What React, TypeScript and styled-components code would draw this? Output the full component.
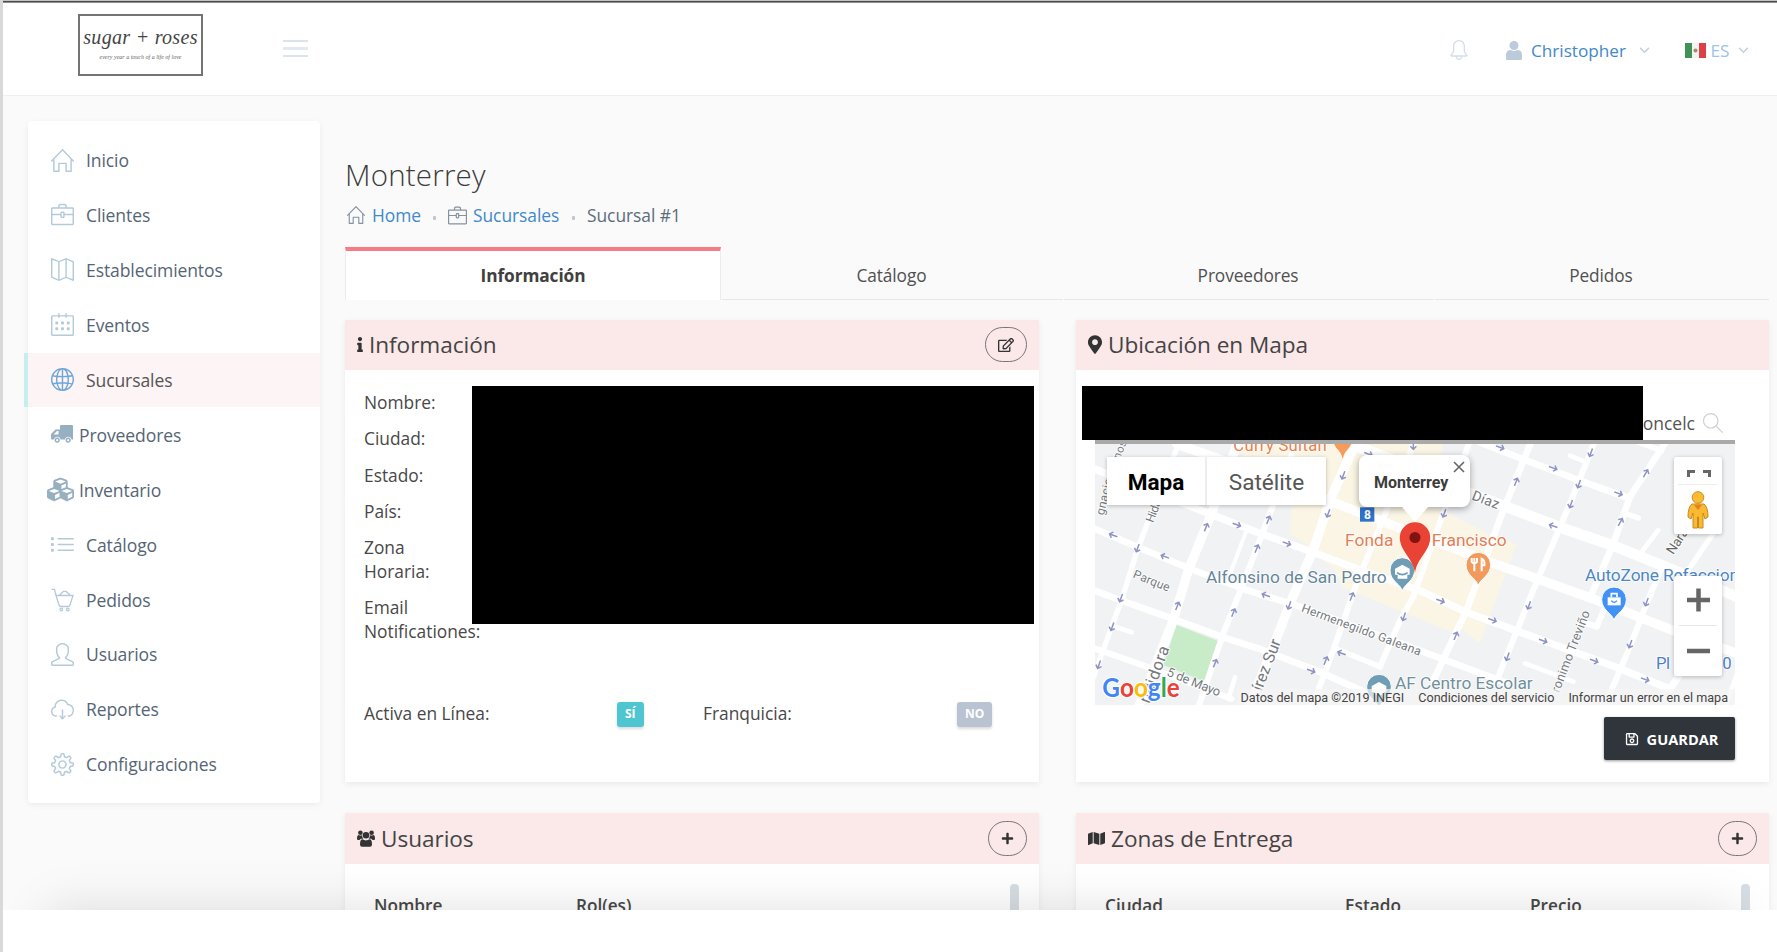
import React from 'react';
import styled, { createGlobalStyle, css } from 'styled-components';
import {
  SlHome, SlBriefcase, SlMap, SlCalender, SlGlobe, SlList, SlUser,
  SlCloudDownload, SlSettings, SlBell, SlMagnifier,
} from 'react-icons/sl';
import { FaCubes, FaMap, FaPlus, FaRegEdit, FaRegSave, FaMapMarkerAlt, FaInfo } from 'react-icons/fa';

const Global = createGlobalStyle`
  *, *::before, *::after { box-sizing: border-box; }
  body { margin: 0; background: #fff; font-family: 'Open Sans', 'Liberation Sans', sans-serif; color: #4a4a4a; }
  svg { display: block; }
`;

const Frame = styled.div`
  position: relative;
  width: 1777px;
  height: 952px;
  overflow: hidden;
  border-left: 3px solid #d9d9d9;
  background: #fff;
`;
const TopEdge = styled.div`
  height: 3px;
  margin-left: -3px;
  background: linear-gradient(#c4c4c4 0 1px, #4d4d4d 1px 2px, #8c8f8c 2px 3px);
`;
const Page = styled.div`
  height: 910px;
  overflow: hidden;
  background: #fafafa;
`;
const Header = styled.header`
  display: flex;
  align-items: center;
  height: 93px;
  padding: 0 27px 0 75px;
  background: #fff;
  border-bottom: 1px solid #edeff5;
`;
const Logo = styled.div`
  width: 125px;
  height: 62px;
  margin-top: -8px;
  padding-top: 9px;
  border: 2px solid #747474;
  text-align: center;
  font-family: 'Liberation Serif', serif;
  font-style: italic;
  color: #444;
`;
const LogoName = styled.div`
  font-size: 20px;
  line-height: 25px;
  letter-spacing: 0.3px;
  white-space: nowrap;
`;
const LogoTag = styled.div`
  font-size: 6px;
  line-height: 14px;
  color: #666;
  white-space: nowrap;
`;
const Burger = styled.div`
  display: flex;
  flex-direction: column;
  justify-content: space-between;
  width: 25px;
  height: 17px;
  margin: -1px auto 0 80px;
  span { height: 2px; background: #dbe3ee; }
  span:nth-child(2) { height: 3px; background: #e2e9f2; }
`;
const HeaderItem = styled.div<{ $w: number; $c?: string }>`
  display: flex;
  align-items: center;
  width: ${p => p.$w}px;
  height: 30px;
  margin-top: 2px;
  white-space: nowrap;
  font-size: 17.2px;
  color: ${p => p.$c || '#4189c9'};
  svg { flex: none; }
`;
const Body = styled.div`
  display: flex;
  align-items: flex-start;
  padding: 25px 5px 0 25px;
`;
const Sidebar = styled.nav`
  width: 292px;
  height: 682px;
  margin-right: 25px;
  padding-top: 12px;
  background: #fff;
  border-radius: 4px;
  box-shadow: 0 2px 6px rgba(0, 0, 0, 0.06);
`;
const NavItem = styled.a<{ $active?: boolean }>`
  display: flex;
  align-items: center;
  height: 54px;
  margin-bottom: 0.95px;
  padding-left: 22px;
  font-size: 17.55px;
  letter-spacing: -0.1px;
  color: #556575;
  ${p => p.$active && css`
    margin-left: -4px;
    border-left: 4px solid #c5efec;
    background: #fdf4f5;
    color: #555;
  `}
`;
const NavIcon = styled.span<{ $solid?: boolean; $active?: boolean; $wide?: boolean }>`
  display: flex;
  justify-content: center;
  flex: none;
  width: ${p => (p.$wide ? 28 : 24)}px;
  margin-left: ${p => (p.$wide ? -4 : 0)}px;
  margin-right: ${p => (p.$solid ? 5 : 12)}px;
  color: ${p => (p.$active ? '#6fa6d8' : p.$solid ? '#96afc1' : '#b3cadb')};
`;
const Main = styled.main`
  width: 1424px;
  padding-top: 34px;
`;
const Title = styled.h1`
  margin: 0;
  font-size: 29.5px;
  line-height: 40px;
  font-weight: 300;
  letter-spacing: 0.2px;
  color: #3c3c3c;
`;
const Crumbs = styled.div`
  display: flex;
  align-items: center;
  height: 24px;
  margin: 8px 0 20px;
  padding-left: 2px;
  font-size: 17.4px;
  letter-spacing: -0.05px;
  color: #5d6c7a;
  svg { flex: none; color: #8493a0; }
`;
const Crumb = styled.a<{ $w: number; $gap: number }>`
  width: ${p => p.$w}px;
  padding-left: ${p => p.$gap}px;
  color: #4189c9;
  white-space: nowrap;
`;
const Dot = styled.span`
  width: 3px;
  height: 4px;
  margin: 5px 12px 0 0;
  background: #c0c6d0;
  border-radius: 1px;
`;
const Tabs = styled.div`
  display: grid;
  grid-template-columns: 376px 341px 370px 334px;
  column-gap: 1px;
  height: 53px;
`;
const Tab = styled.div<{ $active?: boolean }>`
  display: flex;
  align-items: center;
  justify-content: center;
  padding: 4px 2px 0 0;
  font-size: 17.3px;
  letter-spacing: -0.1px;
  color: #505050;
  border-bottom: 1px solid #e6e8e8;
  ${p => p.$active && css`
    padding: 0;
    border: 1px solid #ececec;
    border-top: 4px solid #f47c82;
    border-bottom: 0;
    background: #fff;
    font-weight: 700;
    color: #404040;
  `}
`;
const Cards = styled.div`
  display: grid;
  grid-template-columns: 694px 693px;
  grid-template-rows: 462px 200px;
  column-gap: 37px;
  row-gap: 31px;
  margin-top: 20px;
`;
const Card = styled.section`
  background: #fff;
  box-shadow: 0 2px 6px rgba(0, 0, 0, 0.07);
`;
const CardHead = styled.div<{ $h: number }>`
  display: flex;
  align-items: center;
  height: ${p => p.$h}px;
  padding: 0 12px ${p => (p.$h === 50 ? 1 : 0)}px;
  background: #fbe8e9;
  font-size: 22.6px;
  color: #444;
`;
const HeadIcon = styled.span<{ $w: number; $h: number }>`
  flex: none;
  svg {
    width: ${p => p.$w}px;
    height: ${p => p.$h}px;
    color: #333;
  }
`;
const HeadText = styled.span`
  margin-left: 6px;
  flex: 1;
  letter-spacing: -0.05px;
`;
const RoundButton = styled.button<{ $w: number }>`
  display: flex;
  align-items: center;
  justify-content: center;
  width: ${p => p.$w}px;
  height: 35px;
  padding: 0;
  border: 1.5px solid #777;
  border-radius: 18px;
  background: transparent;
  color: #333;
`;
const InfoBody = styled.div`
  position: relative;
  padding: 20px 19px 0;
  font-size: 17.35px;
  line-height: 24px;
  color: #484848;
`;
const Field = styled.div`
  width: 90px;
  margin-bottom: 12.3px;
`;
const Redaction = styled.div<{ $x: number; $y: number; $w: number; $h: number }>`
  position: absolute;
  left: ${p => p.$x}px;
  top: ${p => p.$y}px;
  width: ${p => p.$w}px;
  height: ${p => p.$h}px;
  background: #000;
`;
const Flags = styled.div`
  display: grid;
  grid-template-columns: 253px 86px 254px 60px;
  align-items: center;
  margin-top: 56px;
`;
const Badge = styled.span<{ $c: string }>`
  justify-self: start;
  height: 25px;
  margin-top: 3px;
  padding: 0 8px;
  border-radius: 3px;
  background: ${p => p.$c};
  box-shadow: 0 2px 3px rgba(0, 0, 0, 0.15);
  color: #fff;
  font-size: 12px;
  line-height: 24px;
  font-weight: 700;
`;
const MapBody = styled.div`
  position: relative;
  padding: 0 34px 0 19px;
`;
const Search = styled.div`
  display: flex;
  justify-content: flex-end;
  align-items: center;
  height: 74px;
  padding: 35px 12px 0 0;
  border-bottom: 4px solid #a9a9a9;
  font-size: 17.5px;
  color: #555;
  svg { margin-left: 8px; color: #d0d0d0; }
`;
const MapBox = styled.div`
  position: relative;
  height: 261px;
  overflow: hidden;
  font-family: Roboto, sans-serif;
`;
const MapSwitch = styled.div`
  position: absolute;
  left: 12px;
  top: 13px;
  display: flex;
  height: 48px;
  box-shadow: 0 1px 4px rgba(0, 0, 0, 0.25);
`;
const SwitchItem = styled.div<{ $w: number; $on?: boolean }>`
  width: ${p => p.$w}px;
  background: #fff;
  border-right: ${p => (p.$on ? '2px solid #ededed' : '0')};
  text-align: center;
  line-height: 51px;
  font-size: ${p => (p.$on ? 22.6 : 22.6)}px;
  font-weight: ${p => (p.$on ? 700 : 400)};
  color: ${p => (p.$on ? '#000' : '#565656')};
`;
const MapControl = styled.div<{ $y: number; $h: number }>`
  position: absolute;
  left: 579px;
  top: ${p => p.$y}px;
  width: 48px;
  height: ${p => p.$h}px;
  background: #fff;
  border-radius: 2px;
  box-shadow: 0 1px 4px rgba(0, 0, 0, 0.25);
`;
const Popup = styled.div`
  position: absolute;
  left: 264px;
  top: 11px;
  width: 111px;
  height: 52px;
  padding-left: 15px;
  border-radius: 8px;
  background: #fff;
  box-shadow: 0 2px 7px rgba(0, 0, 0, 0.35);
  font-size: 16px;
  line-height: 56px;
  font-weight: 700;
  color: #3c3c3c;
  svg { position: absolute; right: 5px; top: 6px; }
  &::after {
    content: '';
    position: absolute;
    left: 43px;
    top: 52px;
    border: 13px solid transparent;
    border-top: 15px solid #fff;
    border-bottom: 0;
  }
`;
const Pin = styled.svg`
  position: absolute;
  left: 304px;
  top: 78px;
`;
const Legal = styled.div`
  position: absolute;
  right: 0;
  bottom: 0;
  display: flex;
  gap: 14px;
  height: 16px;
  padding: 0 7px 0 4px;
  background: rgba(245, 245, 245, 0.7);
  font-size: 12.6px;
  line-height: 17px;
  color: #444;
  white-space: nowrap;
`;
const Save = styled.button`
  display: flex;
  align-items: center;
  justify-content: center;
  gap: 8px;
  width: 131px;
  height: 43px;
  margin: 12px 0 0 auto;
  padding: 0 0 0 4px;
  border: 0;
  border-radius: 2px;
  background: #2f353b;
  box-shadow: 0 1px 3px rgba(0, 0, 0, 0.4);
  color: #fff;
  font: 700 14.6px 'Open Sans', sans-serif;
`;
const TableHead = styled.div<{ $cols: string }>`
  display: grid;
  grid-template-columns: ${p => p.$cols};
  padding: 20px 0 0 29px;
  font-size: 17.2px;
  line-height: 44px;
  font-weight: 600;
  color: #484848;
`;
const Thumb = styled.span`
  width: 9px;
  height: 60px;
  border-radius: 4px;
  background: #d6dee3;
`;
const Shade = styled.div`
  position: absolute;
  left: 45px;
  top: 910px;
  width: 1690px;
  height: 100px;
  box-shadow: 0 0 50px rgba(0, 0, 0, 0.13);
`;
const Footer = styled.div`
  position: relative;
  height: 42px;
  background: #fff;
`;

const Chevron = () => (
  <svg width="11" height="7" viewBox="0 0 12 8" fill="none" stroke="#c3d0df" strokeWidth="1.7"><path d="M1 1l5 5 5-5" /></svg>
);
const Truck = () => (
  <svg width="23" height="19" viewBox="0 0 23 19">
    <path fill="currentColor" fillRule="evenodd" d="M10 0H21Q22 0 22 1V14.500H20.500A3.300 3.300 0 0 0 14 14.500H9.500A3.300 3.300 0 0 0 3 14.500H1Q0 14.500 0 13.500V9L4.500 4.500H9V1Q9 0 10 0zM6 6L2.500 9.500H7.500V6z" />
    <path fill="currentColor" fillRule="evenodd" d="M6.200 12.500a2.600 2.600 0 1 0 .01 0zm0 1.500a1.100 1.100 0 1 1-.01 0zM17.200 12.500a2.600 2.600 0 1 0 .01 0zm0 1.500a1.100 1.100 0 1 1-.01 0z" />
  </svg>
);
const Cart = () => (
  <svg width="23" height="24" viewBox="0 0 23 24" fill="none" stroke="currentColor" strokeWidth="1.300">
    <path d="M.5 1.300H3.500L5 7.500L8 17Q8.500 18.500 10 18.500H17Q18.500 18.500 19 17L22 7.500H5M8 7.500L12.500 3.300H15L19.500 7.500" />
    <circle cx="10.300" cy="21.500" r="1.300" /><circle cx="16.800" cy="21.500" r="1.300" />
  </svg>
);
const Group = () => (
  <svg viewBox="0 0 18 17" fill="#333">
    <circle cx="3.400" cy="2.700" r="2.300" /><circle cx="14.600" cy="2.700" r="2.300" />
    <path d="M0 8.500Q0 5 1.800 5Q3.400 6 5 5.200Q5 7.500 6.300 8.700H3.800Q2.800 9.500 2.500 10H1Q0 10 0 8.500zM18 8.500Q18 5 16.200 5Q14.600 6 13 5.200Q13 7.500 11.700 8.700H14.200Q15.200 9.500 15.500 10H17Q18 10 18 8.500z" />
    <circle cx="9" cy="5.300" r="3.300" />
    <path d="M3 14.500Q3 9.300 5.500 9.300Q9 11.500 12.500 9.300Q15 9.300 15 14.500Q15 16.700 13 16.700H5Q3 16.700 3 14.500z" />
  </svg>
);

const nav: { label: string; icon: React.ReactNode; solid?: boolean; wide?: boolean; active?: boolean }[] = [
  { label: 'Inicio', icon: <SlHome size={23} /> },
  { label: 'Clientes', icon: <SlBriefcase size={23} /> },
  { label: 'Establecimientos', icon: <SlMap size={23} /> },
  { label: 'Eventos', icon: <SlCalender size={23} /> },
  { label: 'Sucursales', icon: <SlGlobe size={23} />, active: true },
  { label: 'Proveedores', icon: <Truck />, solid: true },
  { label: 'Inventario', icon: <FaCubes size={27} />, solid: true, wide: true },
  { label: 'Catálogo', icon: <SlList size={23} /> },
  { label: 'Pedidos', icon: <Cart /> },
  { label: 'Usuarios', icon: <SlUser size={23} /> },
  { label: 'Reportes', icon: <SlCloudDownload size={23} /> },
  { label: 'Configuraciones', icon: <SlSettings size={23} /> },
];

/* Road centre lines: [width, points] */
const roads: [number, string][] = [
  [16, '255,-10 130,308 80,468 50,548 -5,700'],
  [28, '430,-10 350,208 280,378 235,528 160,720 130,790'],
  [18, '605,-10 525,208 445,418 385,568 310,790'],
  [12, '455,258 405,390'],
  [28, '785,-10 705,168 655,318 585,478 535,608 462,790'],
  [18, '960,-10 855,248 785,418 715,618 650,790'],
  [18, '1125,-10 1045,208 1005,318 955,458 915,530 855,668'],
  [20, '1310,-10 1225,198 1115,498 1015,710'],
  [18, '1500,-10 1425,178 1315,438 1205,710'],
  [20, '1715,-10 1605,158 1555,298 1490,450'],
  [18, '1535,480 1505,548 1475,538'],
  [18, '1700,370 1655,478 1605,608 1540,760'],
  [16, '1860,260 1765,400'],
  [14, '1690,258 1635,330'],
  [20, '-10,250 130,310 295,378 445,435 615,488 975,620 1230,715'],
  [22, '-10,72 265,178 345,210 495,268 655,325 795,378 975,440 1115,505 1345,590 1565,670 1725,735 1755,690'],
  [28, '245,0 415,60 715,175 895,245 1095,320 1195,358 1315,400 1495,465 1735,560 1930,630'],
  [32, '780,5 900,50 1130,150 1225,185 1395,250 1555,305 1735,378 1930,460'],
  [20, '1155,-5 1295,50 1455,110 1600,162'],
  [14, '1425,35 1475,55'],
  [16, '1630,-5 1700,20'],
  [16, '1590,208 1630,222'],
  [20, '-10,437 95,475 235,525 385,580 495,615 665,680 800,740 900,790'],
  [18, '-10,610 155,668 410,765'],
  [16, '725,615 855,668'],
  [14, '60,548 110,565'],
  [14, '420,700 400,765'],
  [14, '1290,658 1435,713'],
  [14, '1930,680 1890,790'],
];
/* One-way markers: x, y, angle */
const arrows: [number, number, number][] = [
  [55, 274, 200], [128, 312, 110], [210, 338, 200], [333, 250, -68], [425, 242, 20], [520, 228, -68],
  [485, 314, -68], [575, 298, 20], [700, 208, 110], [745, 94, 110], [78, 462, 110], [247, 486, -68],
  [52, 548, 110], [12, 662, 110], [415, 506, -68], [513, 454, 200], [583, 484, 110], [770, 458, -68],
  [927, 518, 110], [740, 628, 200], [692, 650, -68], [648, 680, 20], [360, 658, -68], [1215, 10, 20],
  [1488, 26, 110], [1374, 72, 20], [1263, 114, -68], [1452, 120, 110], [1428, 180, 110], [1570, 148, 20],
  [1652, 88, -60], [1576, 234, -60], [1375, 246, 200], [1048, 208, 110], [1036, 470, 20], [1302, 484, 110],
  [1192, 528, 20], [1082, 576, -68], [1344, 590, 20], [1238, 638, 110], [1497, 650, 20], [1606, 600, 110],
  [1655, 474, 110], [1650, 706, 20], [820, 30, 20], [955, 4, 90],
];

type LabelProps = { x: number; y: number; w: number; s: number; c?: string; r?: number; children: string };
const Label = ({ x, y, w, s, c = '#757a7e', r = 0, children }: LabelProps) => (
  <text
    x={x} y={y} fontSize={s} fill={c} textLength={w} stroke="#fff" strokeWidth="5" paintOrder="stroke"
    strokeLinejoin="round" transform={`rotate(${r} ${x} ${y})`}
  >{children}</text>
);
const Poi = ({ x, y, c }: { x: number; y: number; c: string }) => (
  <path transform={`translate(${x} ${y})`} fill={c} stroke="#fff" strokeWidth="3" d="M0 56C-4 34-37 26-37-8a37 37 0 0 1 74 0C37 26 4 34 0 56z" />
);

const CityMap = () => (
  <svg width="640" height="261" viewBox="0 0 1920 783" fontFamily="Roboto, sans-serif">
    <rect width="1920" height="783" fill="#f0f2f4" />
    <path fill="#faf5e4" d="M415 0H1045L1010 180L1180 270L1265 300L1155 598L1105 560L1070 565L740 430L720 380L645 310L585 270L590 190z" />
    <path fill="#c8ebc8" d="M245 543L375 593L330 713L205 663z" />
    <g fill="none" stroke="#fff" strokeLinejoin="round" strokeLinecap="round">
      {roads.map(([w, pts], i) => <polyline key={i} points={pts} strokeWidth={w} />)}
    </g>
    <g fill="none" stroke="#8e93c4" strokeWidth="4.5">
      {arrows.map(([x, y, a], i) => (
        <path key={i} transform={`translate(${x} ${y}) rotate(${a})`} d="M-13 0H12M3-9L12 0L3 9" />
      ))}
    </g>
    <Label x={415} y={20} w={280} s={50} c="#e8804f">Curry Sultan</Label>
    <path fill="#f59c5b" d="M712-10H775L762 12Q748 24 743 44Q738 24 724 12z" />
    <Label x={74} y={48} w={58} s={34} r={-68}>nos</Label>
    <Label x={26} y={215} w={112} s={36} r={-76}>gnacio</Label>
    <Label x={175} y={238} w={70} s={36} r={-70}>Hida</Label>
    <Label x={112} y={400} w={115} s={36} r={22}>Parque</Label>
    <Label x={163} y={780} w={178} s={50} r={-70}>ndidora</Label>
    <Label x={213} y={694} w={170} s={38} r={22}>5 de Mayo</Label>
    <Label x={500} y={744} w={162} s={48} r={-69}>írez Sur</Label>
    <Label x={617} y={502} w={380} s={36} r={20.5}>Hermenegildo Galeana</Label>
    <Label x={1128} y={166} w={84} s={42} r={21}>Díaz</Label>
    <Label x={1392} y={748} w={260} s={38} r={-69}>ronimo Treviño</Label>
    <Label x={1735} y={334} w={84} s={40} r={-57} c="#666">Nara</Label>
    <rect x="795" y="190" width="43" height="43" fill="#2f73cc" />
    <text x="807" y="225" fontSize="36" fontWeight="700" fill="#fff">8</text>
    <Label x={750} y={307} w={145} s={52} c="#e37d55">Fonda</Label>
    <Label x={1010} y={307} w={225} s={52} c="#e37d55">Francisco</Label>
    <Label x={333} y={418} w={542} s={52} c="#65859a">Alfonsino de San Pedro</Label>
    <Label x={1470} y={412} w={462} s={52} c="#4c87c6">AutoZone Refaccion</Label>
    <Label x={1683} y={676} w={42} s={50} c="#4c7fc9">Pl</Label>
    <Label x={1882} y={676} w={28} s={50} c="#4c7fc9">0</Label>
    <Label x={900} y={736} w={413} s={52} c="#71909b">AF Centro Escolar</Label>
    <Poi x={922} y={386} c="#6f9db5" />
    <path fill="#fff" d="M900 374L922 362L944 374V392H937V404H908V392H900z" />
    <path fill="none" stroke="#6f9db5" strokeWidth="5" d="M906 386Q922 398 938 386" />
    <Poi x={1150} y={370} c="#f29a5c" />
    <path fill="none" stroke="#fff" strokeWidth="6" d="M1138 342V382M1130 342V354Q1138 364 1146 354V342M1160 382V344Q1170 348 1168 364H1160" />
    <Poi x={1557} y={474} c="#4292f5" />
    <path fill="#fff" d="M1538 460H1577V484H1538z" />
    <path fill="none" stroke="#fff" strokeWidth="5" d="M1549 460V449H1566V460" />
    <path fill="none" stroke="#4292f5" strokeWidth="4" d="M1549 470Q1557 480 1566 470" />
    <Poi x={852} y={736} c="#6f9db5" />
    <path fill="#fff" d="M830 726L852 714L874 726V744H867V752H838V744H830z" />
    <text x="22" y="758" fontSize="80" fontWeight="700" textLength="232" lengthAdjust="spacingAndGlyphs" stroke="#fff" strokeWidth="7" paintOrder="stroke" fontFamily="Lato, sans-serif">
      <tspan fill="#4285f4">G</tspan><tspan fill="#ea4335">o</tspan><tspan fill="#fbbc05">o</tspan>
      <tspan fill="#4285f4">g</tspan><tspan fill="#34a853">l</tspan><tspan fill="#ea4335">e</tspan>
    </text>
  </svg>
);

const MapCard = () => (
  <Card>
    <CardHead $h={50}>
      <HeadIcon $w={14} $h={19}><FaMapMarkerAlt /></HeadIcon><HeadText>Ubicación en Mapa</HeadText>
    </CardHead>
    <MapBody>
      <Search>oncelc<SlMagnifier size={20} /></Search>
      <Redaction $x={6} $y={16} $w={561} $h={54} />
      <MapBox>
        <CityMap />
        <MapSwitch><SwitchItem $w={100} $on>Mapa</SwitchItem><SwitchItem $w={119}>Satélite</SwitchItem></MapSwitch>
        <Popup>
          Monterrey
          <svg width="12" height="12" viewBox="0 0 12 12" stroke="#666" strokeWidth="1.6"><path d="M1 1l10 10M11 1L1 11" /></svg>
        </Popup>
        <Pin width="32" height="52" viewBox="0 0 32 52">
          <path fill="#ea4335" d="M16 51C14 36 .8 29 .8 15.500a15.200 15.200 0 0 1 30.400 0C31.200 29 18 36 16 51z" />
          <circle cx="16" cy="15.500" r="5.500" fill="#811411" />
        </Pin>
        <MapControl $y={13} $h={77}>
          <svg width="48" height="77" viewBox="0 0 48 77">
            <path fill="none" stroke="#666" strokeWidth="3" d="M14.500 20V14.500H21M29 14.500H35.500V20" />
            <path stroke="#eee" d="M4 27.500H44" />
            <g stroke="#c98a1c" strokeWidth="1">
              <path fill="#f9b932" d="M18 47Q14 50 14 60L17 62L19 56V71H23.500V60H24.500V71H29V56L31 62L34 60Q34 50 30 47z" />
              <circle cx="24" cy="40.500" r="5.800" fill="#fbbc34" />
            </g>
            <path fill="#e8811f" d="M20 48H28L24 53z" />
          </svg>
        </MapControl>
        <MapControl $y={132} $h={100}>
          <svg width="48" height="100" viewBox="0 0 48 100">
            <path stroke="#666" strokeWidth="4.500" d="M13 24H36M24.500 12.500V35.500M13 75H36" />
            <path stroke="#e6e6e6" d="M5 49.500H43" />
          </svg>
        </MapControl>
        <Legal><span>Datos del mapa ©2019 INEGI</span><span>Condiciones del servicio</span><span>Informar un error en el mapa</span></Legal>
      </MapBox>
      <Save><FaRegSave size={14} />GUARDAR</Save>
    </MapBody>
  </Card>
);

export default function App() {
  return (
    <Frame>
      <Global />
      <Page>
        <TopEdge />
        <Header>
          <Logo><LogoName>sugar + roses</LogoName><LogoTag>every year a touch of a life of love</LogoTag></Logo>
          <Burger><span /><span /><span /></Burger>
          <HeaderItem $w={57} $c="#d3deea"><SlBell size={20} /></HeaderItem>
          <HeaderItem $w={133}>
            <svg width="16" height="19" viewBox="0 0 16 19" fill="#bccbdc"><circle cx="8" cy="4.500" r="4.500" /><path d="M0 18V14Q0 9 5 9Q8 11 11 9Q16 9 16 14V18Q16 19 15 19H1Q0 19 0 18z" /></svg>
            <span>&nbsp;&nbsp;Christopher</span>
          </HeaderItem>
          <HeaderItem $w={46}><Chevron /></HeaderItem>
          <HeaderItem $w={53} $c="#9cc3e8">
            <svg width="21" height="15" viewBox="0 0 21 15"><path fill="#f3f3f0" d="M0 0H21V15H0z" /><path fill="#3f9158" d="M0 0H7V15H0z" /><path fill="#dc4046" d="M14 0H21V15H14z" /><circle cx="10.500" cy="7.500" r="2" fill="#a08c68" /></svg>
            <span>&nbsp;ES</span>
          </HeaderItem>
          <HeaderItem $w={12}><Chevron /></HeaderItem>
        </Header>
        <Body>
          <Sidebar>
            {nav.map(n => (
              <NavItem key={n.label} $active={n.active}>
                <NavIcon $solid={n.solid} $wide={n.wide} $active={n.active}>{n.icon}</NavIcon>{n.label}
              </NavItem>
            ))}
          </Sidebar>
          <Main>
            <Title>Monterrey</Title>
            <Crumbs>
              <SlHome size={18} />
              <Crumb $w={68} $gap={7}>Home</Crumb><Dot />
              <SlBriefcase size={19} />
              <Crumb $w={105} $gap={6}>Sucursales</Crumb><Dot />
              <span>Sucursal #1</span>
            </Crumbs>
            <Tabs>
              <Tab $active>Información</Tab><Tab>Catálogo</Tab><Tab>Proveedores</Tab><Tab>Pedidos</Tab>
            </Tabs>
            <Cards>
              <Card>
                <CardHead $h={50}>
                  <HeadIcon $w={6} $h={15}><FaInfo /></HeadIcon><HeadText>Información</HeadText>
                  <RoundButton $w={42}><FaRegEdit size={16} /></RoundButton>
                </CardHead>
                <InfoBody>
                  <Field>Nombre:</Field><Field>Ciudad:</Field><Field>Estado:</Field><Field>País:</Field>
                  <Field>Zona Horaria:</Field><Field>Email Notificationes:</Field>
                  <Redaction $x={127} $y={16} $w={562} $h={238} />
                  <Flags>
                    <span>Activa en Línea:</span><Badge $c="#4fc5d1">SÍ</Badge>
                    <span>Franquicia:</span><Badge $c="#bac3d2">NO</Badge>
                  </Flags>
                </InfoBody>
              </Card>
              <MapCard />
              <Card>
                <CardHead $h={51}>
                  <HeadIcon $w={18} $h={17}><Group /></HeadIcon><HeadText>Usuarios</HeadText>
                  <RoundButton $w={39}><FaPlus size={13} /></RoundButton>
                </CardHead>
                <TableHead $cols="202px 434px 20px"><span>Nombre</span><span>Rol(es)</span><Thumb /></TableHead>
              </Card>
              <Card>
                <CardHead $h={51}>
                  <HeadIcon $w={17} $h={17}><FaMap /></HeadIcon><HeadText>Zonas de Entrega</HeadText>
                  <RoundButton $w={39}><FaPlus size={13} /></RoundButton>
                </CardHead>
                <TableHead $cols="240px 185px 211px 20px"><span>Ciudad</span><span>Estado</span><span>Precio</span><Thumb /></TableHead>
              </Card>
            </Cards>
          </Main>
        </Body>
      </Page>
      <Shade />
      <Footer />
    </Frame>
  );
}
